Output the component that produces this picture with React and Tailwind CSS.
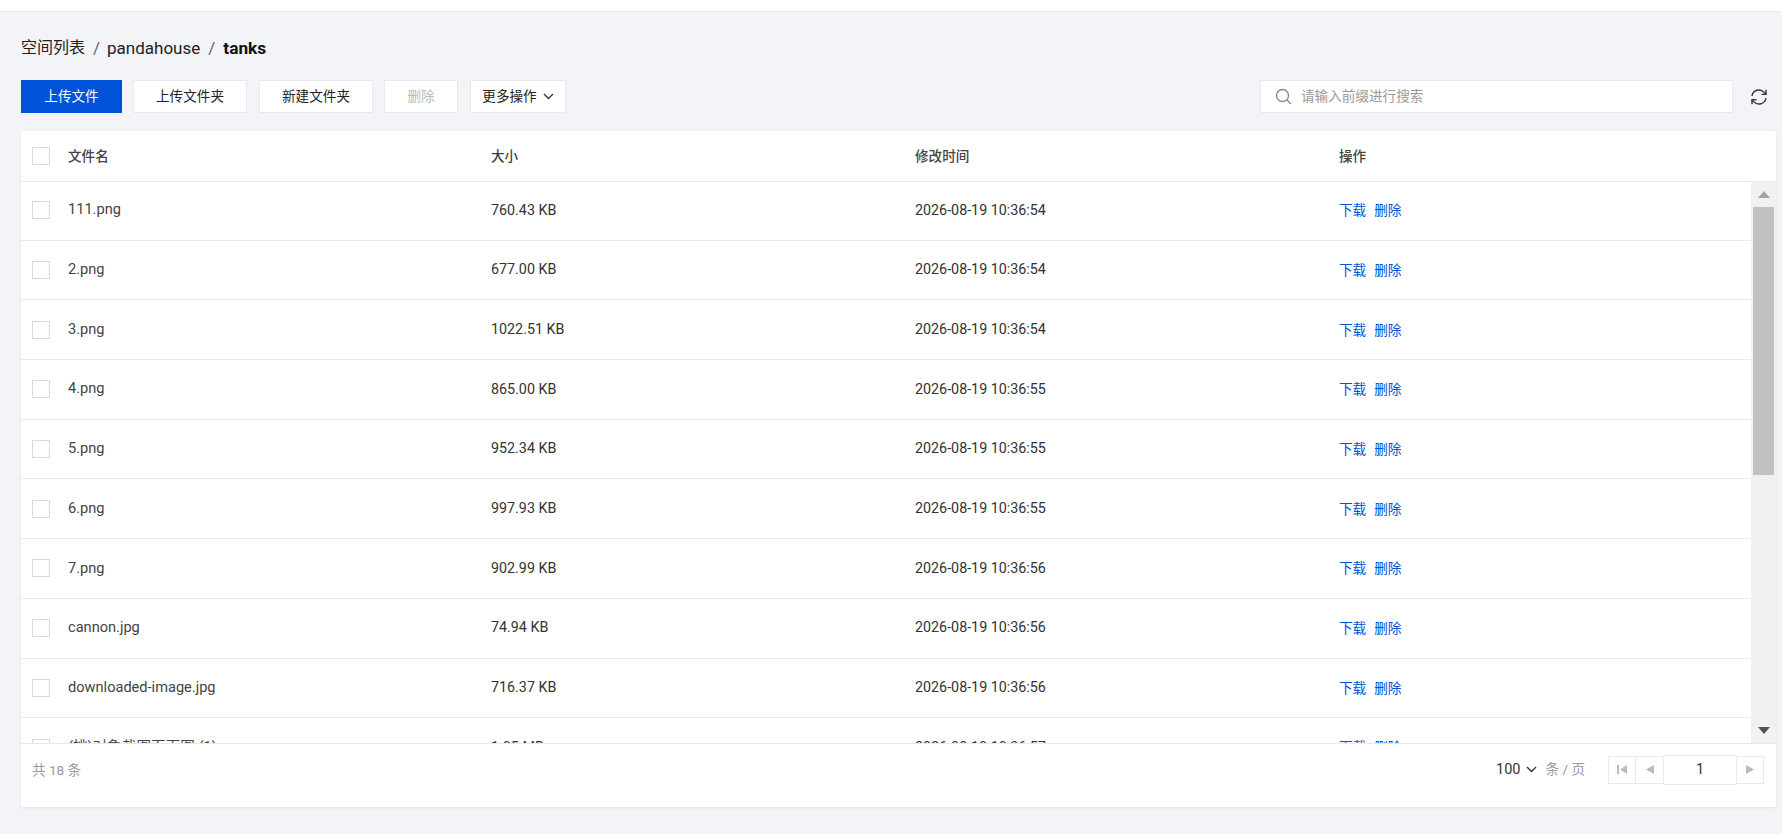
import React from "react";

const rows = [
  ["111.png", "760.43 KB", "2026-08-19 10:36:54"],
  ["2.png", "677.00 KB", "2026-08-19 10:36:54"],
  ["3.png", "1022.51 KB", "2026-08-19 10:36:54"],
  ["4.png", "865.00 KB", "2026-08-19 10:36:55"],
  ["5.png", "952.34 KB", "2026-08-19 10:36:55"],
  ["6.png", "997.93 KB", "2026-08-19 10:36:55"],
  ["7.png", "902.99 KB", "2026-08-19 10:36:56"],
  ["cannon.jpg", "74.94 KB", "2026-08-19 10:36:56"],
  ["downloaded-image.jpg", "716.37 KB", "2026-08-19 10:36:56"],
  ["(桃)对象截图页面图 (1)", "1.05 MB", "2026-08-19 10:36:57"],
];

const font = { fontFamily: '"Roboto","Noto Sans CJK SC",sans-serif' };

function Check() {
  return <span className="block h-[18px] w-[18px] border border-[#d5dbe6] bg-white" />;
}

function Btn({ children, w, cls = "" }) {
  return (
    <button className={`flex h-[33px] items-center justify-center border border-[#e6e9f0] bg-white text-[13.6px] text-[#222] ${w} ${cls}`}>
      {children}
    </button>
  );
}

export default function App() {
  return (
    <div style={font} className="flex h-[834px] w-[1782px] flex-col overflow-hidden bg-[#f3f4f8]">
      <div className="h-[12px] shrink-0 border-b border-[#e6e9f0] bg-white" />
      <div className="flex min-h-0 flex-1 flex-col pl-[21px] pr-[6px]">
        <div className="mt-[24px] flex h-[24px] items-center text-[16px] leading-[24px] text-[#222]">
          <span>空间列表</span>
          <span className="ml-[8px] mr-[7px] text-[17px] text-[#666]">/</span>
          <span className="text-[17px]">pandahouse</span>
          <span className="mx-[8px] text-[17px] text-[#666]">/</span>
          <span className="text-[17.3px] font-bold text-[#111]">tanks</span>
        </div>
        <div className="mt-[20px] flex h-[33px] items-center">
          <button className="flex h-[33px] w-[101px] items-center justify-center bg-[#0052d9] text-[13.6px] text-white">上传文件</button>
          <Btn w="w-[114px] ml-[11px]">上传文件夹</Btn>
          <Btn w="w-[114px] ml-[12px]">新建文件夹</Btn>
          <Btn w="w-[74px] ml-[11px]" cls="!text-[#bbb]">删除</Btn>
          <Btn w="w-[96px] ml-[12px]" cls="gap-[6px]">
            更多操作
            <svg width="11" height="7" viewBox="0 0 11 7" fill="none" stroke="#333" strokeWidth="1.3"><path d="M1 1l4.5 4.5L10 1" /></svg>
          </Btn>
          <div className="ml-auto flex h-[33px] w-[473px] items-center border border-[#e6e9f0] bg-white pl-[14px] text-[13.6px] text-[#999]">
            <svg width="17" height="17" viewBox="0 0 17 17" fill="none" stroke="#888" strokeWidth="1.3"><circle cx="7.5" cy="7.5" r="6" /><path d="M12 12l4 4" /></svg>
            <span className="ml-[9px]">请输入前缀进行搜索</span>
          </div>
          <div className="ml-[17px] mr-[8px] flex w-[18px] justify-center">
            <svg width="18" height="18" viewBox="0 0 18 18" fill="none" stroke="#333" strokeWidth="1.4">
              <path d="M2 8a7 7 0 0 1 12.2-3.6L16 6.2" />
              <path d="M16 1.8v4.6h-4.6" />
              <path d="M16 10a7 7 0 0 1-12.2 3.6L2 11.8" />
              <path d="M2 16.2v-4.6h4.6" />
            </svg>
          </div>
        </div>

        <div className="mt-[18px] flex h-[676px] w-[1755px] flex-col bg-white shadow-[0_1px_3px_rgba(0,0,0,0.06)]">
          <div className="flex h-[50px] shrink-0 items-center text-[13.6px] font-medium text-[#444]">
            <div className="w-[47px] pl-[11px]"><Check /></div>
            <div className="w-[423px]">文件名</div>
            <div className="w-[424px]">大小</div>
            <div className="w-[424px]">修改时间</div>
            <div>操作</div>
          </div>
          <div className="flex h-[563px] shrink-0 overflow-hidden border-y border-[#e6e9f0]">
            <div className="-mt-[1px] min-w-0 flex-1 overflow-hidden">
              {rows.map((r) => (
                <div key={r[0]} className="flex h-[59.7px] items-center border-b border-[#e9ebf1] text-[14.3px] text-[#333]">
                  <div className="w-[47px] pl-[11px]"><Check /></div>
                  <div className="w-[423px] text-[14.6px] text-[#444]">{r[0]}</div>
                  <div className="w-[424px]">{r[1]}</div>
                  <div className="w-[424px]">{r[2]}</div>
                  <div className="flex gap-[8px] text-[13.6px] text-[#0052d9]"><span>下载</span><span>删除</span></div>
                </div>
              ))}
            </div>
            <div className="flex w-[25px] shrink-0 flex-col items-center bg-[#f1f1f1]">
              <div className="flex h-[25px] shrink-0 items-center justify-center">
                <svg width="12" height="7" viewBox="0 0 12 7"><path d="M6 0l6 7H0z" fill="#a3a3a3" /></svg>
              </div>
              <div className="h-[268px] w-[21px] bg-[#c1c1c1]" />
              <div className="mt-auto flex h-[25px] shrink-0 items-center justify-center">
                <svg width="12" height="7" viewBox="0 0 12 7"><path d="M6 7L0 0h12z" fill="#505050" /></svg>
              </div>
            </div>
          </div>
          <div className="flex flex-1 items-start pl-[11px] pr-[12px] pt-[11px] text-[13.6px]">
            <span className="mt-[5px] text-[#999]">共 18 条</span>
            <div className="ml-auto flex items-center">
              <span className="text-[14.5px] text-[#333]">100</span>
              <svg className="ml-[6px]" width="11" height="7" viewBox="0 0 11 7" fill="none" stroke="#333" strokeWidth="1.4"><path d="M1 1l4.5 4.5L10 1" /></svg>
              <span className="ml-[8px] text-[#999]">条 / 页</span>
              <div className="ml-[23px] flex h-[29px] items-center text-[#333]">
                <div className="flex h-[28px] w-[28px] items-center justify-center border border-[#e6e9f0]">
                  <svg width="10" height="9" viewBox="0 0 10 9" fill="#bbb"><path d="M0 0h2v9H0zM10 0v9L3 4.5z" /></svg>
                </div>
                <div className="flex h-[28px] w-[28px] items-center justify-center border-y border-r border-[#e6e9f0]">
                  <svg width="8" height="9" viewBox="0 0 8 9" fill="#bbb"><path d="M8 0v9L0 4.5z" /></svg>
                </div>
                <div className="flex h-[30px] w-[72px] items-center justify-center border-y border-[#e6e9f0] text-[14.5px]">1</div>
                <div className="flex h-[28px] w-[28px] items-center justify-center border border-[#e6e9f0]">
                  <svg width="8" height="9" viewBox="0 0 8 9" fill="#bbb"><path d="M0 0v9l8-4.5z" /></svg>
                </div>
              </div>
            </div>
          </div>
        </div>
      </div>
    </div>
  );
}
